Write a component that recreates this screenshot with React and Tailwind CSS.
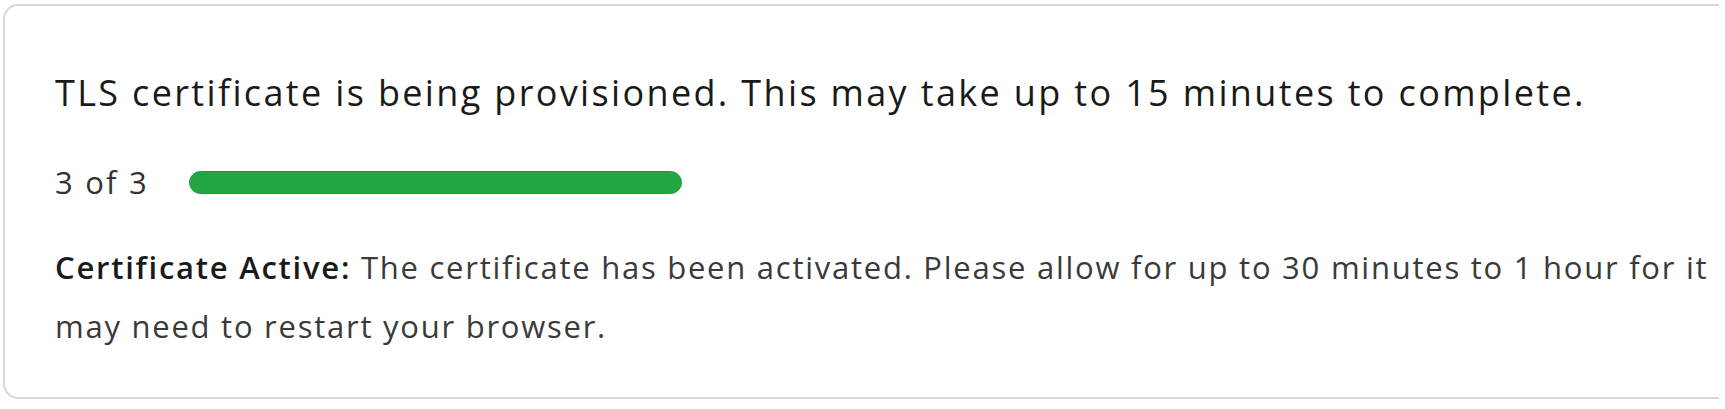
import React from 'react';

export default function App() {
  return (
    <div className="w-[1725px] h-[409px] bg-white">
      <div className="w-[1719px] h-[409px] overflow-hidden pt-[4px] pl-[3px]" style={{ fontFamily: '"Open Sans", sans-serif' }}>
        <div className="w-[1800px] h-[395px] border-2 border-[#d6d7db] rounded-[15px] bg-white pl-[50px] pt-[63px]">
          <p className="text-[36px] leading-[48px] tracking-[2.35px] text-[#1a1a1a] whitespace-nowrap">
            TLS certificate is being provisioned. This may take up to 15 minutes to complete.
          </p>
          <div className="flex items-center gap-[40px] mt-[45px] h-[40px]">
            <span className="text-[31px] leading-[40px] tracking-[2.2px] text-[#333]">3 of 3</span>
            <div className="w-[493px] h-[23px] rounded-full bg-[#22a744] border border-[#1d9a3c]" />
          </div>
          <div className="mt-[36px] text-[31px] leading-[59px] tracking-[1.75px] text-[#3a3a3a] whitespace-nowrap">
            <p>
              <span className="font-semibold text-[#1a1a1a]">Certificate Active:</span> The certificate has been activated. Please allow for up to 30 minutes to 1 hour for it
            </p>
            <p>may need to restart your browser.</p>
          </div>
        </div>
      </div>
    </div>
  );
}
